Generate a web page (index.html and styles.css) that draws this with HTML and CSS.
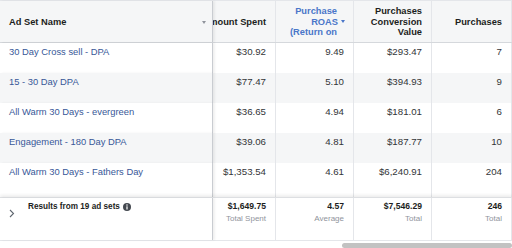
FILE: index.html
```html
<!DOCTYPE html>
<html>
<head>
<meta charset="utf-8">
<link rel="stylesheet" href="styles.css">
</head>
<body>
<div class="table">
  <div class="row head">
    <div class="cell first namehead"><span class="hd">Ad Set Name</span><span class="sortcaret"></span></div>
    <div class="cell num clip"><span class="hd nowrap">Amount Spent</span></div>
    <div class="cell num roas"><div class="hd blue">Purchase<br>ROAS<span class="bluecaret"></span><br>(Return on</div></div>
    <div class="cell num"><div class="hd">Purchases<br>Conversion<br>Value</div></div>
    <div class="cell num"><div class="hd">Purchases</div></div>
  </div>

  <div class="row body">
    <div class="cell first"><span class="link">30 Day Cross sell - DPA</span></div>
    <div class="cell num"><span class="val">$30.92</span></div>
    <div class="cell num"><span class="val">9.49</span></div>
    <div class="cell num"><span class="val">$293.47</span></div>
    <div class="cell num"><span class="val">7</span></div>
  </div>
  <div class="row body alt">
    <div class="cell first"><span class="link">15 - 30 Day DPA</span></div>
    <div class="cell num"><span class="val">$77.47</span></div>
    <div class="cell num"><span class="val">5.10</span></div>
    <div class="cell num"><span class="val">$394.93</span></div>
    <div class="cell num"><span class="val">9</span></div>
  </div>
  <div class="row body">
    <div class="cell first"><span class="link">All Warm 30 Days - evergreen</span></div>
    <div class="cell num"><span class="val">$36.65</span></div>
    <div class="cell num"><span class="val">4.94</span></div>
    <div class="cell num"><span class="val">$181.01</span></div>
    <div class="cell num"><span class="val">6</span></div>
  </div>
  <div class="row body alt">
    <div class="cell first"><span class="link">Engagement - 180 Day DPA</span></div>
    <div class="cell num"><span class="val">$39.06</span></div>
    <div class="cell num"><span class="val">4.81</span></div>
    <div class="cell num"><span class="val">$187.77</span></div>
    <div class="cell num"><span class="val">10</span></div>
  </div>
  <div class="row body last">
    <div class="cell first"><span class="link">All Warm 30 Days - Fathers Day</span></div>
    <div class="cell num"><span class="val">$1,353.54</span></div>
    <div class="cell num"><span class="val">4.61</span></div>
    <div class="cell num"><span class="val">$6,240.91</span></div>
    <div class="cell num"><span class="val">204</span></div>
  </div>

  <div class="row foot">
    <div class="cell first footname">
      <svg class="chev" width="6" height="9" viewBox="0 0 6 9"><path d="M1 1 L4.5 4.5 L1 8" fill="none" stroke="#606770" stroke-width="1.1"/></svg>
      <span class="results">Results from 19 ad sets</span>
      <svg class="info" width="8" height="8" viewBox="0 0 8 8"><circle cx="4" cy="4" r="4" fill="#444950"/><rect x="3.4" y="3.3" width="1.2" height="3.2" fill="#fff"/><circle cx="4" cy="2.1" r="0.75" fill="#fff"/></svg>
    </div>
    <div class="cell num sum"><div class="tot">$1,649.75</div><div class="lbl nowrap">Total Spent</div></div>
    <div class="cell num sum"><div class="tot">4.57</div><div class="lbl">Average</div></div>
    <div class="cell num sum"><div class="tot">$7,546.29</div><div class="lbl">Total</div></div>
    <div class="cell num sum"><div class="tot">246</div><div class="lbl">Total</div></div>
  </div>
  <div class="scrolltrack"><div class="thumb"></div></div>
</div>
</body>
</html>
```

FILE: styles.css
```css
html, body {
  margin: 0;
  padding: 0;
  background: #ffffff;
}
body {
  font-family: "Liberation Sans", Arial, sans-serif;
  color: #1c1e21;
  width: 512px;
  height: 248px;
  overflow: hidden;
}
.table {
  width: 512px;
}
.row {
  display: grid;
  grid-template-columns: 213px 63px 78px 78px 80px;
}
.cell {
  box-sizing: border-box;
  border-right: 1px solid #e4e6ea;
  min-width: 0;
  font-size: 9.5px;
  line-height: 12px;
}
.cell.first {
  border-right: 1px solid #c9ccd1;
  box-shadow: 2px 0 2px rgba(0, 0, 0, 0.06);
  position: relative;
  z-index: 1;
  padding-left: 9px;
}
.head {
  height: 43px;
  background: #f5f6f7;
  border-top: 1px solid #e4e6ea;
  border-bottom: 1px solid #d5d8dc;
  box-sizing: border-box;
}
.head .cell {
  display: flex;
  align-items: center;
  padding-top: 1px;
}
.head .cell.first {
  background: #f5f6f7;
}
.hd {
  font-weight: bold;
  font-size: 9.3px;
  line-height: 10.5px;
  color: #1c1e21;
}
.nowrap {
  white-space: nowrap;
}
.namehead {
  justify-content: space-between;
  padding-right: 6px;
}
.sortcaret {
  width: 0;
  height: 0;
  border-left: 2.5px solid transparent;
  border-right: 2.5px solid transparent;
  border-top: 3px solid #90949c;
  margin-top: 1px;
}
.num {
  text-align: right;
  padding-right: 9px;
}
.head .num {
  justify-content: flex-end;
}
.clip {
  overflow: hidden;
}
.roas {
  padding-right: 16px;
}
.blue {
  color: #4a76c9;
}
.bluecaret {
  display: inline-block;
  width: 0;
  height: 0;
  border-left: 2.5px solid transparent;
  border-right: 2.5px solid transparent;
  border-top: 3px solid #4a76c9;
  margin-left: 3px;
  margin-right: -8px;
  vertical-align: 2px;
}
.body {
  height: 30px;
}
.body .cell {
  padding-top: 3px;
  background: #ffffff;
}
.body.alt .cell {
  background: #f5f6f7;
}
.body.last {
  height: 34px;
}
.link {
  font-size: 9.4px;
  line-height: 12px;
  color: #385898;
  white-space: nowrap;
}
.val {
  font-size: 9.7px;
  line-height: 12px;
  color: #333538;
}
.foot {
  height: 44px;
  border-top: 1px solid #dddfe2;
  border-bottom: 1px solid #e4e6ea;
  box-sizing: border-box;
  box-shadow: 0 -2px 3px rgba(0, 0, 0, 0.07);
  position: relative;
  z-index: 2;
  background: #ffffff;
}
.foot .cell {
  background: #ffffff;
  padding-top: 3px;
}
.footname {
  display: flex;
  align-items: flex-start;
}
.chev {
  margin-top: 8px;
  margin-right: 13px;
  flex: none;
}
.results {
  font-weight: bold;
  font-size: 8.2px;
  line-height: 11px;
  color: #1c1e21;
  white-space: nowrap;
}
.info {
  margin-left: 3px;
  margin-top: 1.5px;
  flex: none;
}
.tot {
  font-weight: bold;
  font-size: 8.6px;
  line-height: 11px;
  color: #1c1e21;
}
.lbl {
  font-size: 8px;
  line-height: 13px;
  color: #90949c;
}
.scrolltrack {
  padding-top: 2px;
  height: 8px;
  box-sizing: border-box;
}
.thumb {
  margin-left: 342px;
  height: 5px;
  border-radius: 3px;
  background: #c2c2c2;
}
```
